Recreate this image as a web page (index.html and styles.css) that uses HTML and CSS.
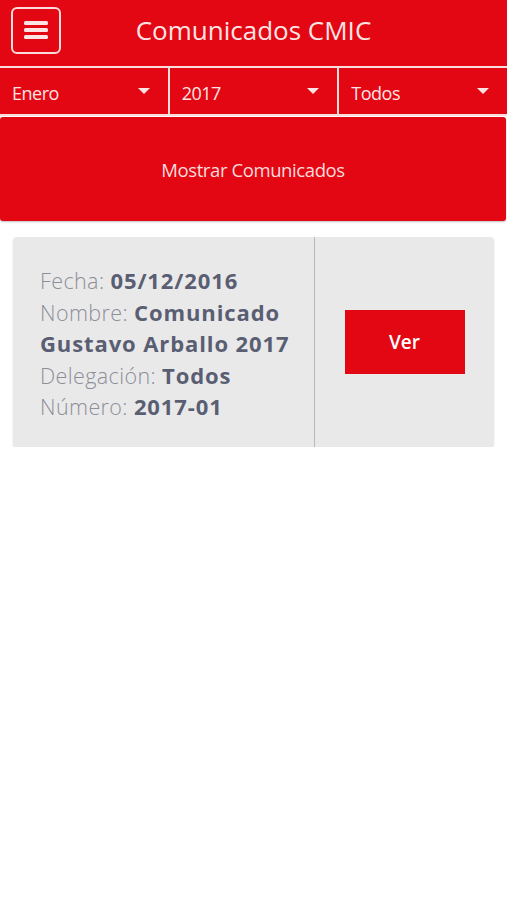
FILE: index.html
```html
<!DOCTYPE html>
<html>
<head>
  <title>Comunicados CMIC</title>
  <link rel="stylesheet" href="styles.css">
</head>
<body>
  <header class="barra">
    <button class="menu" type="button">
      <svg width="24" height="20" viewBox="0 0 24 20">
        <rect x="0" y="1" width="24" height="4" rx="1.5" fill="#fde4e4"/>
        <rect x="0" y="8" width="24" height="4" rx="1.5" fill="#fde4e4"/>
        <rect x="0" y="15" width="24" height="4" rx="1.5" fill="#fde4e4"/>
      </svg>
    </button>
    <h1>Comunicados CMIC</h1>
  </header>

  <div class="filtros">
    <div class="filtro"><span>Enero</span><i class="flecha"></i></div>
    <div class="filtro"><span>2017</span><i class="flecha"></i></div>
    <div class="filtro"><span>Todos</span><i class="flecha"></i></div>
  </div>

  <button class="mostrar" type="button">Mostrar Comunicados</button>

  <div class="tarjeta">
    <div class="datos">
      <div>Fecha: <b>05/12/2016</b></div>
      <div>Nombre: <b>Comunicado Gustavo Arballo 2017</b></div>
      <div>Delegación: <b>Todos</b></div>
      <div>Número: <b>2017-01</b></div>
    </div>
    <div class="accion">
      <button class="ver" type="button">Ver</button>
    </div>
  </div>
</body>
</html>
```

FILE: styles.css
```css
body {
  font-family: "Open Sans", Arial, sans-serif;
  background-color: #fff;
  margin: 0;
  padding: 0;
}

.barra {
  background-color: #e30613;
  height: 66px;
  display: flex;
  align-items: center;
}

.menu {
  margin-left: 11px;
  margin-top: -6px;
  width: 50px;
  height: 47px;
  border: 2px solid #fbdcdc;
  border-radius: 6px;
  background: none;
  display: flex;
  align-items: center;
  justify-content: center;
  padding: 0;
}

.barra h1 {
  flex: 1;
  margin: 0 0 6px 0;
  padding-right: 61px;
  text-align: center;
  font-size: 26px;
  font-weight: 400;
  color: #fde4e4;
}

.filtros {
  display: flex;
  background-color: #e30613;
  border-top: 2px solid #fbdcdc;
  border-bottom: 2px solid #fbdcdc;
}

.filtro {
  flex: 1;
  height: 46px;
  display: flex;
  align-items: center;
  justify-content: space-between;
  padding: 4px 18px 0 12px;
  box-sizing: border-box;
  color: #fde4e4;
  font-size: 18px;
  letter-spacing: -0.5px;
  border-left: 2px solid #fbdcdc;
}

.filtro:first-child {
  border-left: none;
}

.flecha {
  width: 0;
  height: 0;
  margin-top: -4px;
  border-left: 6px solid transparent;
  border-right: 6px solid transparent;
  border-top: 6px solid #fde4e4;
}

.mostrar {
  display: block;
  width: 506px;
  height: 104px;
  margin-top: 1px;
  background-color: #e30613;
  border: none;
  border-radius: 3px;
  box-shadow: 0 1px 2px rgba(0, 0, 0, 0.25);
  color: #fbdcdc;
  font-family: "Open Sans", Arial, sans-serif;
  font-size: 18.5px;
  letter-spacing: -0.4px;
}

.tarjeta {
  display: flex;
  margin: 16px 13px 0 13px;
  height: 210px;
  background-color: #e9e9ea;
  border-radius: 4px;
  box-shadow: 0 1px 2px rgba(0, 0, 0, 0.12);
}

.datos {
  width: 274px;
  padding: 28px 0 0 27px;
  border-right: 1px solid #b9b9bd;
  font-size: 21.5px;
  line-height: 31.5px;
  font-weight: 300;
  letter-spacing: 0.4px;
  color: #8d8f98;
}

.datos b {
  font-size: 22px;
  font-weight: 700;
  letter-spacing: 0.9px;
  color: #5a5e72;
}

.accion {
  flex: 1;
  display: flex;
  align-items: center;
  justify-content: center;
}

.ver {
  width: 120px;
  height: 64px;
  background-color: #e30613;
  border: none;
  color: #fff;
  font-family: "Open Sans", Arial, sans-serif;
  font-size: 19px;
  font-weight: 600;
}
```
